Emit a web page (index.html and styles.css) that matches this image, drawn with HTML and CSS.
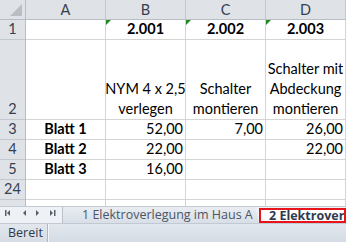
FILE: index.html
```html
<!DOCTYPE html>
<html lang="de">
  <head>
    <meta charset="UTF-8" />
    <title>Elektroverlegung</title>
    <link rel="stylesheet" href="styles.css">
  </head>
  <body>
    <div class="sheet">
      <div class="grid">
        <div class="corner"></div>
        <div class="hd">A</div>
        <div class="hd">B</div>
        <div class="hd">C</div>
        <div class="hd">D</div>

        <div class="rh">1</div>
        <div class="c"></div>
        <div class="c ctr b flag">2.001</div>
        <div class="c ctr b flag">2.002</div>
        <div class="c ctr b flag">2.003</div>

        <div class="rh">2</div>
        <div class="c"></div>
        <div class="c ctr">NYM 4 x 2,5<br>verlegen</div>
        <div class="c ctr">Schalter<br>montieren</div>
        <div class="c ctr">Schalter mit<br>Abdeckung<br>montieren</div>

        <div class="rh">3</div>
        <div class="c ctr b">Blatt 1</div>
        <div class="c num">52,00</div>
        <div class="c num">7,00</div>
        <div class="c num">26,00</div>

        <div class="rh">4</div>
        <div class="c ctr b">Blatt 2</div>
        <div class="c num">22,00</div>
        <div class="c num"></div>
        <div class="c num">22,00</div>

        <div class="rh">5</div>
        <div class="c ctr b">Blatt 3</div>
        <div class="c num">16,00</div>
        <div class="c num"></div>
        <div class="c num"></div>

        <div class="rh">24</div>
        <div class="c"></div>
        <div class="c"></div>
        <div class="c"></div>
        <div class="c"></div>

        <div class="rh last"></div>
        <div class="c last"></div>
        <div class="c last"></div>
        <div class="c last"></div>
        <div class="c last"></div>
      </div>

      <div class="tabbar">
        <div class="nav">
          <svg width="62" height="16" viewBox="0 0 62 16">
            <rect x="5" y="3" width="1.5" height="6" />
            <path d="M10 3 L7 6 L10 9 Z" />
            <path d="M26 3 L23 6 L26 9 Z" />
            <path d="M36 3 L39 6 L36 9 Z" />
            <path d="M50 3 L53 6 L50 9 Z" />
            <rect x="54" y="3" width="1.5" height="6" />
          </svg>
        </div>
        <div class="tab">1 Elektroverlegung im Haus A</div>
        <div class="tab active">2 Elektrover</div>
      </div>

      <div class="status">
        <span class="ready">Bereit</span>
      </div>
    </div>
  </body>
</html>
```

FILE: styles.css
```css
* {
  box-sizing: border-box;
  margin: 0;
  padding: 0;
}

body {
  width: 346px;
  height: 242px;
  overflow: hidden;
  background: #ffffff;
  font-family: Lato, "Liberation Sans", sans-serif;
}

.sheet {
  display: flex;
  flex-direction: column;
  width: 346px;
}

.grid {
  display: grid;
  grid-template-columns: 26px 80px 80px 80px 80px;
  grid-template-rows: 20px 20px 80px 20px 20px 20px 20px 6px;
}

.corner {
  background: #dfe2e6;
  border-right: 1px solid #b8bdc4;
  border-bottom: 1px solid #b8bdc4;
  position: relative;
}

.corner::after {
  content: "";
  position: absolute;
  right: 3px;
  bottom: 3px;
  width: 12px;
  height: 12px;
  background: #b9bec5;
  clip-path: polygon(100% 0, 100% 100%, 0 100%);
}

.hd {
  background: #dfe3e8;
  border-right: 1px solid #c3c8cf;
  border-bottom: 1px solid #b8bdc4;
  color: #34404f;
  font-size: 14.5px;
  line-height: 19px;
  text-align: center;
}

.rh {
  background: #dfe3e8;
  border-right: 1px solid #b8bdc4;
  border-bottom: 1px solid #c3c8cf;
  color: #34404f;
  font-size: 14.5px;
  line-height: 20px;
  display: flex;
  align-items: flex-end;
  justify-content: center;
}

.c {
  border-right: 1px solid #d4d4d4;
  border-bottom: 1px solid #d4d4d4;
  color: #000000;
  font-size: 14.5px;
  line-height: 20px;
  display: flex;
  align-items: flex-end;
  padding: 0 2px;
  position: relative;
  white-space: nowrap;
}

.last {
  border-bottom: none;
}

.ctr {
  justify-content: center;
  text-align: center;
}

.num {
  justify-content: flex-end;
}

.b {
  font-weight: bold;
}

.flag::before {
  content: "";
  position: absolute;
  left: 0;
  top: 0;
  width: 5px;
  height: 5px;
  background: #1e8a22;
  clip-path: polygon(0 0, 100% 0, 0 100%);
}

.tabbar {
  display: flex;
  align-items: flex-end;
  height: 17px;
  border-top: 1px solid #c4cad3;
  background: #edf0f4;
  font-family: "Open Sans", "Liberation Sans", sans-serif;
  font-size: 12.5px;
}

.nav {
  width: 63px;
  height: 16px;
  border-right: 1px solid #b9c0ca;
  background: #eef1f5;
}

.nav svg {
  display: block;
  fill: #56606d;
}

.tab {
  width: 196px;
  height: 16px;
  line-height: 15px;
  padding-left: 19px;
  color: #4b5563;
  background: linear-gradient(#e9edf2, #d9dfe7);
  clip-path: polygon(0 0, calc(100% - 4px) 0, 100% 100%, 0 100%);
  white-space: nowrap;
}

.tab.active {
  width: 87px;
  height: 15px;
  line-height: 11px;
  padding-left: 8px;
  border: 2px solid #e8141c;
  background: #ffffff;
  color: #2e3b4e;
  font-weight: bold;
  overflow: hidden;
  clip-path: none;
}

.status {
  display: flex;
  align-items: center;
  height: 19px;
  background: linear-gradient(#e2e7ee, #d5dce5);
  border-top: 1px solid #c2c9d3;
  font-family: "Open Sans", "Liberation Sans", sans-serif;
  font-size: 12.5px;
  color: #2f3a48;
}

.ready {
  width: 48px;
  height: 100%;
  line-height: 17px;
  padding-left: 8px;
  border-right: 1px solid #aeb6c1;
  box-shadow: 1px 0 0 #f3f5f8;
}
```
